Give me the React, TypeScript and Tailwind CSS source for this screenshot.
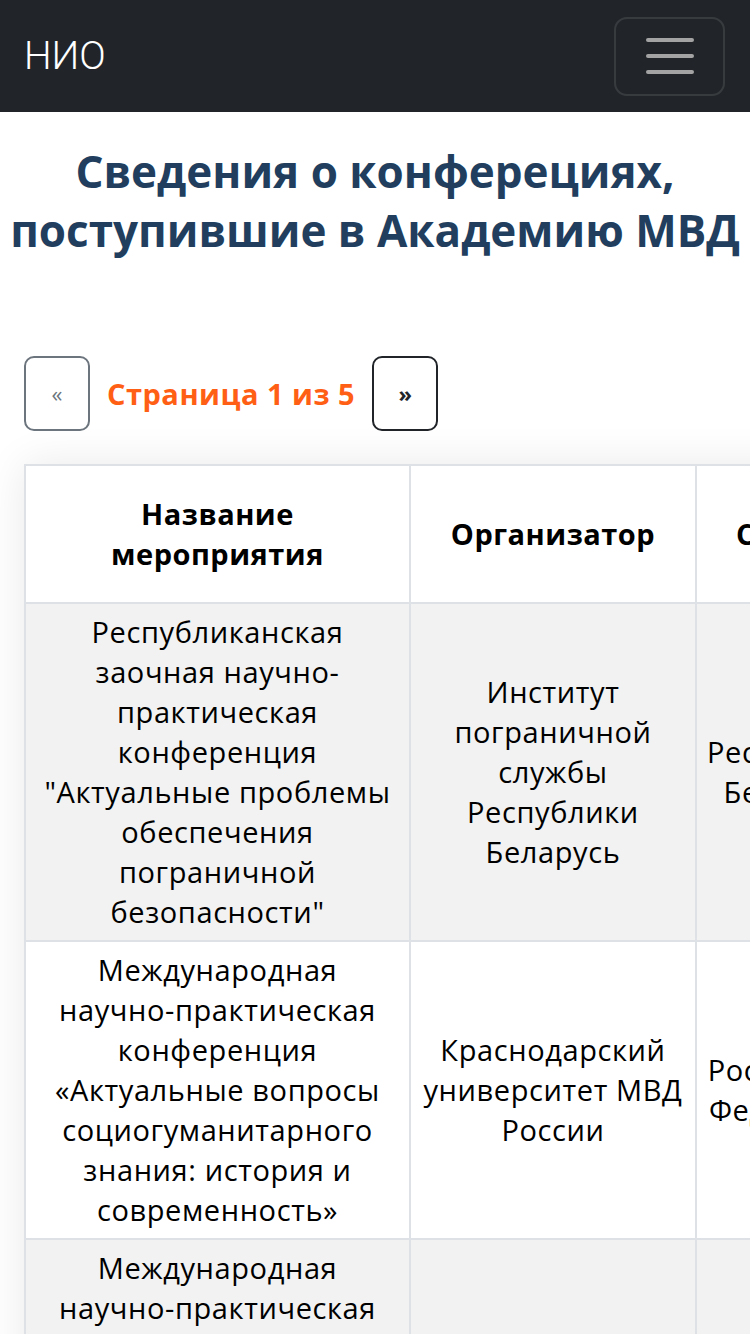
import React from "react";

type Row = {
  title: string[];
  org: string[];
  country: string[];
  date: string[];
};

const rows: Row[] = [
  {
    title: [
      "Республиканская",
      "заочная научно-",
      "практическая",
      "конференция",
      "\"Актуальные проблемы",
      "обеспечения",
      "пограничной",
      "безопасности\"",
    ],
    org: ["Институт", "пограничной", "службы", "Республики", "Беларусь"],
    country: ["Республика", "Беларусь"],
    date: ["15.04.2024"],
  },
  {
    title: [
      "Международная",
      "научно-практическая",
      "конференция",
      "«Актуальные вопросы",
      "социогуманитарного",
      "знания: история и",
      "современность»",
    ],
    org: ["Краснодарский", "университет МВД", "России"],
    country: ["Российская", "Федерация"],
    date: ["25.04.2024"],
  },
  {
    title: [
      "Международная",
      "научно-практическая",
      "конференция",
      "«Уголовно-правовые",
      "и криминологические",
      "аспекты",
      "противодействия",
      "преступности»",
    ],
    org: ["Белгородский", "юридический", "институт МВД", "России"],
    country: ["Российская", "Федерация"],
    date: ["17.05.2024"],
  },
];

function Lines({ lines }: { lines: string[] }) {
  return (
    <>
      {lines.map((l, i) => (
        <span key={i} className="block whitespace-nowrap">
          {l}
        </span>
      ))}
    </>
  );
}

const th =
  "border-2 border-[#dee2e6] px-[10px] py-[28px] text-center align-middle text-[29px] font-bold leading-[40px] tracking-[0.5px]";
const td =
  "border-2 border-[#dee2e6] px-[10px] py-[8px] text-center align-middle text-[29px] leading-[40px] tracking-[0.6px]";

export default function App() {
  return (
    <div
      className="min-h-screen w-[750px] overflow-hidden bg-white text-black"
      style={{ fontFamily: "'Open Sans', Roboto, sans-serif" }}
    >
      <nav className="flex h-[112px] items-center justify-between bg-[#212529] pl-[24px] pr-[25px]">
        <span className="font-['Roboto'] text-[39px] font-light leading-none text-white">НИО</span>
        <button className="flex h-[79px] w-[111px] items-center justify-center rounded-[13px] border-2 border-white/10">
          <svg width="48" height="36" viewBox="0 0 48 36">
            <g stroke="#a3a3a3" strokeWidth="4" strokeLinecap="round">
              <line x1="2" y1="2" x2="46" y2="2" />
              <line x1="2" y1="18" x2="46" y2="18" />
              <line x1="2" y1="34" x2="46" y2="34" />
            </g>
          </svg>
        </button>
      </nav>

      <main>
        <h1 className="mt-[30px] text-center text-[44px] font-bold leading-[59px] text-[#223e5e]">
          Сведения о конферециях,
          <br />
          поступившие в Академию МВД
        </h1>

        <div className="mt-[96px] flex items-center gap-[17px] px-[24px]">
          <button className="flex h-[75px] w-[66px] items-center justify-center rounded-[10px] border-2 border-[#6c757d] text-[22px] text-[#6c757d]">
            «
          </button>
          <span className="text-[29px] font-bold tracking-[0.5px] text-[#ff5f14]">Страница 1 из 5</span>
          <button className="flex h-[75px] w-[66px] items-center justify-center rounded-[10px] border-2 border-[#212529] text-[22px] font-bold text-[#212529]">
            »
          </button>
        </div>

        <div className="mt-[33px] pl-[24px]">
          <table className="w-[1300px] table-fixed border-collapse shadow-[0_0_40px_rgba(0,0,0,0.09)]">
            <colgroup>
              <col className="w-[385px]" />
              <col className="w-[286px]" />
              <col className="w-[190px]" />
              <col className="w-[220px]" />
              <col className="w-[219px]" />
            </colgroup>
            <thead>
              <tr className="bg-white">
                <th className={th}>
                  Название
                  <br />
                  мероприятия
                </th>
                <th className={th}>Организатор</th>
                <th className={th}>Страна</th>
                <th className={th}>Дата</th>
                <th className={th}>Файл</th>
              </tr>
            </thead>
            <tbody>
              {rows.map((r, i) => (
                <tr key={i} className={i % 2 === 0 ? "bg-[#f2f2f2]" : "bg-white"}>
                  <td className={td}>
                    <Lines lines={r.title} />
                  </td>
                  <td className={td}>
                    <Lines lines={r.org} />
                  </td>
                  <td className={td}>
                    <Lines lines={r.country} />
                  </td>
                  <td className={td}>
                    <Lines lines={r.date} />
                  </td>
                  <td className={td}>Скачать</td>
                </tr>
              ))}
            </tbody>
          </table>
        </div>
      </main>
    </div>
  );
}
